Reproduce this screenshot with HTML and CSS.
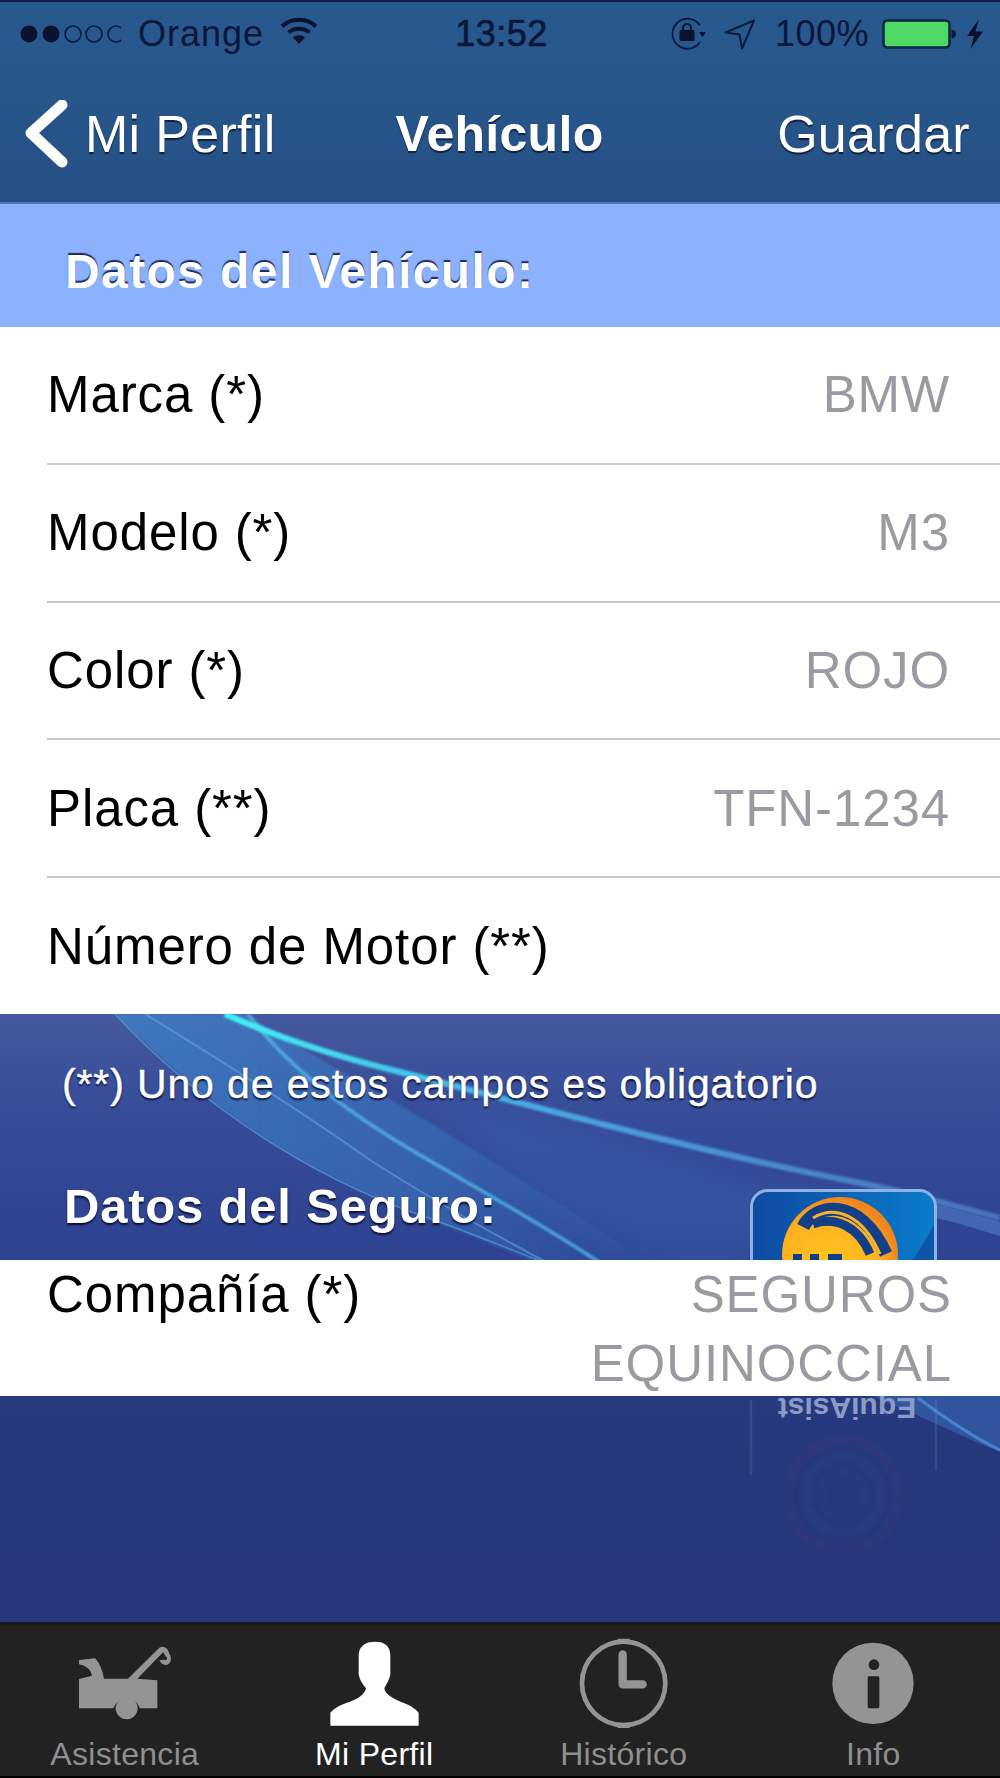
FILE: index.html
```html
<!DOCTYPE html>
<html lang="es">
<head>
<meta charset="utf-8">
<title>Vehículo</title>
<link rel="stylesheet" href="styles.css">
</head>
<body>
<div class="screen">
  <header class="topbar">
    <div class="status">
      <div class="status-left">
        <svg class="signal" width="102" height="20" viewBox="0 0 102 20"><circle cx="10" cy="10" r="8.500" fill="#0b1230"/><circle cx="32" cy="10" r="8.500" fill="#0b1230"/><circle cx="54" cy="10" r="8" fill="none" stroke="#0b1a3c" stroke-width="1.600"/><circle cx="75" cy="10" r="8" fill="none" stroke="#0b1a3c" stroke-width="1.600"/><circle cx="97" cy="10" r="8" fill="none" stroke="#0b1a3c" stroke-width="1.600"/></svg>
        <span class="carrier">Orange</span>
        <svg class="wifi" width="38" height="29" viewBox="0 0 38 29"><path d="M2 10.500C11 1.500 27 1.500 36 10.500" fill="none" stroke="#0b1230" stroke-width="4"/><path d="M8.500 16.500C14 11.500 24 11.500 29.500 16.500" fill="none" stroke="#0b1230" stroke-width="4"/><path d="M13 21.500C16.500 18.500 21.500 18.500 25 21.500L19 28Z" fill="#0b1230"/></svg>
      </div>
      <span class="time">13:52</span>
      <div class="status-right">
        <svg width="38" height="34" viewBox="0 0 38 34"><path d="M30 8.500A15 15 0 1 0 30 25" fill="none" stroke="#0b1a3c" stroke-width="1.800"/><path d="M29 15l7 0-3.500 5Z" fill="#0b1230"/><rect x="9.500" y="13" width="15" height="11" rx="1.500" fill="#0b1230"/><path d="M13 13.500v-2.500a4 4 0 0 1 8 0v2.500" fill="none" stroke="#0b1230" stroke-width="2"/></svg>
        <svg class="arrow" width="32" height="31" viewBox="0 0 32 31"><path d="M1.500 13.500L30 1.500 18 29.500 15.500 15.500Z" fill="none" stroke="#0b1a3c" stroke-width="2" stroke-linejoin="round"/></svg>
        <span class="pct">100%</span>
        <svg class="battery" width="74" height="30" viewBox="0 0 74 30"><rect x="1.500" y="1.500" width="66" height="27" rx="4" fill="#4cd964" stroke="#0b2540" stroke-width="2.500"/><path d="M69.500 10.500c3 .5 4.500 2 4.500 4.500s-1.500 4-4.500 4.500Z" fill="#0b1a3c"/></svg>
        <svg class="bolt" width="18" height="30" viewBox="0 0 18 30"><path d="M13 0L1 17h7l-3.500 13L17 12.500h-7.500Z" fill="#0b1230"/></svg>
      </div>
    </div>
    <nav class="navbar">
      <a class="nav-back"><svg class="chevron" width="44" height="68" viewBox="0 0 44 68"><path d="M37 5L6 33 37 62" fill="none" stroke="#fff" stroke-width="11" stroke-linecap="round" stroke-linejoin="round"/></svg><span>Mi Perfil</span></a>
      <h1 class="nav-title">Vehículo</h1>
      <a class="nav-save">Guardar</a>
    </nav>
  </header>

  <main class="content">
    <h2 class="band">Datos del Vehículo:</h2>
    <section class="list">
      <div class="row"><span>Marca (*)</span><span class="value">BMW</span></div>
      <div class="row"><span>Modelo (*)</span><span class="value">M3</span></div>
      <div class="row"><span>Color (*)</span><span class="value">ROJO</span></div>
      <div class="row"><span>Placa (**)</span><span class="value">TFN-1234</span></div>
      <div class="row last"><span>Número de Motor (**)</span></div>
    </section>

    <section class="wallpaper-area">
      <svg class="wallpaper" width="1000" height="608" viewBox="0 1014 1000 608" preserveAspectRatio="none">
        <defs>
          <linearGradient id="bg" x1="0" y1="0" x2="0" y2="1"><stop offset="0" stop-color="#45599f"/><stop offset=".12" stop-color="#394f9a"/><stop offset=".4" stop-color="#2d4290"/><stop offset=".7" stop-color="#26387c"/><stop offset="1" stop-color="#25367b"/></linearGradient>
          <linearGradient id="band" x1="0" y1="0" x2="1" y2="0"><stop offset="0" stop-color="#3f8ed0" stop-opacity=".6"/><stop offset=".6" stop-color="#3a78c4" stop-opacity=".5"/><stop offset="1" stop-color="#3468b8" stop-opacity=".1"/></linearGradient>
          <linearGradient id="cyan" gradientUnits="userSpaceOnUse" x1="225" y1="0" x2="1000" y2="0"><stop offset="0" stop-color="#3ff4f8"/><stop offset=".14" stop-color="#45d8f0"/><stop offset=".4" stop-color="#48a8e2"/><stop offset="1" stop-color="#5a96d8" stop-opacity=".55"/></linearGradient>
          <linearGradient id="tile" x1="0" y1="0" x2="1" y2="0"><stop offset="0" stop-color="#0e4aa3"/><stop offset="1" stop-color="#0a7cca"/></linearGradient>
          <radialGradient id="sun" cx=".4" cy=".6" r=".6"><stop offset="0" stop-color="#ffc81e"/><stop offset=".75" stop-color="#fdb01f"/><stop offset="1" stop-color="#f0851d"/></radialGradient>
          <filter id="soft" x="-10%" y="-10%" width="120%" height="120%"><feGaussianBlur stdDeviation="14"/></filter>
          <filter id="soft2" x="-5%" y="-5%" width="110%" height="110%"><feGaussianBlur stdDeviation="1"/></filter>
          <filter id="soft3" x="-20%" y="-20%" width="140%" height="140%"><feGaussianBlur stdDeviation="3"/></filter>
        </defs>
        <rect x="0" y="1014" width="1000" height="608" fill="url(#bg)"/>
        <path d="M420 1090C560 1130 720 1170 880 1215L700 1290 560 1220Z" fill="#3a6fbe" opacity=".28" filter="url(#soft)"/>
        <path d="M115 1014C190 1090 290 1170 420 1215 480 1240 540 1265 600 1290L660 1270C600 1230 530 1185 450 1135 370 1085 300 1050 245 1014Z" fill="url(#band)" filter="url(#soft2)"/>
        <path d="M115 1014C180 1085 290 1170 420 1215 520 1250 590 1285 650 1300" fill="none" stroke="#5fa8e0" stroke-width="1.500" opacity=".6"/>
        <path d="M145 1014C220 1060 300 1110 370 1160 440 1205 520 1250 620 1300" fill="none" stroke="#63afe6" stroke-width="2" opacity=".5"/>
        <path d="M248 1014C290 1070 350 1115 420 1155 480 1190 570 1240 640 1290" fill="none" stroke="#56c0ea" stroke-width="3.500" opacity=".75" filter="url(#soft2)"/>
        <path d="M225 1014C270 1034 330 1055 400 1072 520 1102 690 1150 860 1183 920 1195 960 1208 1000 1218" fill="none" stroke="url(#cyan)" stroke-width="6" filter="url(#soft2)"/>
        <path d="M936 1205C960 1210 985 1218 1000 1222L1000 1236C980 1230 955 1222 936 1218Z" fill="#5a90d4" opacity=".45"/>
        <path d="M860 1385L1000 1385 1000 1452C960 1436 920 1415 880 1400Z" fill="#3a6cb8" opacity=".55"/>
        <path d="M918 1398C950 1422 975 1438 1000 1450" fill="none" stroke="#4d8fd8" stroke-width="3" opacity=".8"/>

        <rect x="751.500" y="1190.500" width="184" height="160" rx="16" fill="url(#tile)" stroke="#8fb2e4" stroke-width="3"/>
        <path d="M934 1225L934 1300 880 1300C905 1275 920 1250 934 1225Z" fill="#0c55a8"/>
        <circle cx="840" cy="1255" r="58" fill="url(#sun)"/>
        <path d="M803 1227C815 1203 860 1196 886 1254" fill="none" stroke="#123f87" stroke-width="13"/>
        <path d="M813 1218C835 1205 862 1214 880 1254" fill="none" stroke="#f5b52a" stroke-width="3"/>
        <path d="M813 1224C835 1216 858 1226 870 1254" fill="none" stroke="#123f87" stroke-width="9"/>
        <path d="M793 1254h9v12h-9zM810 1254h9v12h-9zM828 1254h14v12h-14z" fill="#123f87"/>

        <path d="M751 1400V1475M936 1400V1470" stroke="#8ea2d0" stroke-width="2.500" opacity=".16"/>
        <text class="mirror" transform="translate(847 1398) rotate(180)" text-anchor="middle">EquiAsist</text>
        <circle cx="843" cy="1495" r="55" fill="none" stroke="#47397c" stroke-width="6" opacity=".4" filter="url(#soft3)"/>
        <circle cx="843" cy="1495" r="38" fill="none" stroke="#32478c" stroke-width="6" opacity=".45" filter="url(#soft3)"/>
        <circle cx="843" cy="1495" r="22" fill="none" stroke="#304589" stroke-width="5" opacity=".35" filter="url(#soft3)"/>
      </svg>
      <p class="note">(**) Uno de estos campos es obligatorio</p>
      <h2 class="section-title">Datos del Seguro:</h2>
      <div class="row row-tall"><span>Compañía (*)</span><span class="value value-wrap">SEGUROS EQUINOCCIAL</span></div>
      <div class="spacer"></div>
    </section>
  </main>

  <footer class="tabbar">
    <a class="tab">
      <svg class="tab-icon" width="100" height="93.330" viewBox="225 105 300 280"><path d="M237 177L285 172C298 185 307 205 312 233L384 233 478 140C492 132 505 142 508 158 515 168 515 182 505 190 495 195 484 190 478 178L492 176C497 179 502 176 501 170 497 165 492 160 490 153L412 233 472 238 472 322 420 322A42 42 0 0 0 340 322L237 322 237 234 276 224C272 205 260 195 237 190Z" fill="#949494"/><circle cx="380" cy="322" r="33" fill="#949494"/></svg>
      <span>Asistencia</span>
    </a>
    <a class="tab tab-active">
      <svg class="tab-icon" width="95" height="93.330" viewBox="978 105 285 280"><path d="M1122 122C1152 122 1168 135 1168 165L1168 220C1164 240 1155 252 1150 262 1152 278 1170 290 1200 303 1225 312 1240 320 1253 335L1253 374 988 374 988 335C1002 320 1018 312 1045 303 1075 292 1092 278 1095 262 1085 250 1076 238 1073 220L1073 165C1073 135 1092 122 1122 122Z" fill="#fff"/></svg>
      <span>Mi Perfil</span>
    </a>
    <a class="tab">
      <svg class="tab-icon" width="93.330" height="93.330" viewBox="235 105 280 280"><circle cx="375" cy="247" r="125" fill="none" stroke="#949494" stroke-width="14"/><path d="M357 113h36v8h-36zM357 373h36v8h-36z" fill="#949494"/><path d="M372 160V250H432" fill="none" stroke="#949494" stroke-width="25" stroke-linecap="round" stroke-linejoin="round"/></svg>
      <span>Histórico</span>
    </a>
    <a class="tab">
      <svg class="tab-icon" width="86" height="93.330" viewBox="996 105 258 280"><circle cx="1125" cy="247" r="122" fill="#949494"/><circle cx="1128" cy="191" r="16" fill="#222"/><rect x="1109" y="226" width="35" height="96" rx="4" fill="#222"/></svg>
      <span>Info</span>
    </a>
  </footer>
</div>
</body>
</html>
```

FILE: styles.css
```css
* { box-sizing: border-box; }
html, body { margin: 0; padding: 0; }
body { font-family: "Liberation Sans", Arial, sans-serif; background: #000; }
h1, h2, p { margin: 0; font-weight: normal; }

.screen { width: 1000px; height: 1778px; display: flex; flex-direction: column; overflow: hidden; }

.topbar { height: 204px; flex: none; background: linear-gradient(#28598f, #275689 50%, #264f86); border-top: 2px solid #141e4a; border-bottom: 2px solid #4f78b4; display: flex; flex-direction: column; }

.status { height: 64px; flex: none; padding: 0 16px 0 19px; display: grid; grid-template-columns: 1fr auto 1fr; align-items: center; color: #0b1638; font-size: 36px; }
.status-left { display: flex; align-items: center; gap: 17px; }
.carrier { letter-spacing: 1px; }
.status-right { display: flex; align-items: center; justify-content: flex-end; }
.status-right .arrow { margin-left: 16px; }
.status-right .pct { margin-left: 19px; letter-spacing: .5px; }
.status-right .battery { margin-left: 13px; }
.status-right .bolt { margin-left: 10px; }
.wifi { margin-left: -1px; margin-top: -8px; }
.time { font-weight: 500; letter-spacing: .5px; -webkit-text-stroke: .7px #0b1638; }

.navbar { flex: 1; display: grid; grid-template-columns: 1fr auto 1fr; align-items: center; padding: 0 30px 0 25px; color: #fff; font-size: 52px; letter-spacing: .3px; text-shadow: 0 2px 1px #10203f; }
.nav-back { display: flex; align-items: center; gap: 16px; }
.chevron { flex: none; }
.nav-title { font-size: 50px; font-weight: bold; margin-left: 4px; }
.nav-save { justify-self: end; }

.content { flex: 1; display: flex; flex-direction: column; min-height: 0; }

.band { height: 123px; flex: none; background: #8cb1fd; color: #fff; font-size: 48px; font-weight: bold; letter-spacing: 1.4px; padding: 11px 0 0 65px; display: flex; align-items: center; text-shadow: 0 -2px 1px #1b2a55; }

.list { background: #fff; height: 687px; flex: none; display: flex; flex-direction: column; }

.row { flex: 1; display: flex; justify-content: space-between; align-items: center; margin-left: 47px; padding-right: 50px; color: #000; font-size: 51px; letter-spacing: .9px; border-bottom: 2px solid #c8c7cc; background: #fff; }
.row.last { border-bottom: 0; }
.value { color: #9a9aa2; text-align: right; }

.wallpaper-area { position: relative; flex: 1; display: flex; flex-direction: column; min-height: 0; }
.wallpaper { position: absolute; top: 0; left: 0; display: block; }
.mirror { font-family: "Liberation Sans", Arial, sans-serif; font-size: 30px; font-weight: bold; fill: #8b9bc6; }

.note { position: relative; padding: 47px 0 0 62px; color: #fff; font-size: 41px; letter-spacing: .87px; -webkit-text-stroke: .4px #fff; text-shadow: 0 2px 2px #0a1030; }
.section-title { position: relative; margin-top: 70px; padding-left: 64px; color: #fff; font-size: 49px; font-weight: bold; letter-spacing: .8px; text-shadow: 0 2px 2px #0a1030; }

.row-tall { position: relative; flex: none; height: 136px; margin: 26px 0 0; padding: 0 48px 0 47px; align-items: flex-start; border-bottom: 0; }
.row-tall > span:first-child { line-height: 69px; }
.value-wrap { width: 400px; line-height: 69px; }
.spacer { flex: 1; }

.tabbar { height: 156px; flex: none; background: #222; border-top: 4px solid #1b191b; border-bottom: 2px solid #000; display: grid; grid-template-columns: repeat(4, 1fr); padding-right: 2px; }
.tab { display: flex; flex-direction: column; align-items: center; padding-top: 10px; color: #8f8f8f; font-size: 32px; letter-spacing: .3px; line-height: 36px; }
.tab-icon { display: block; flex: none; margin-bottom: 7px; }
.tab-active { color: #fff; }
```
